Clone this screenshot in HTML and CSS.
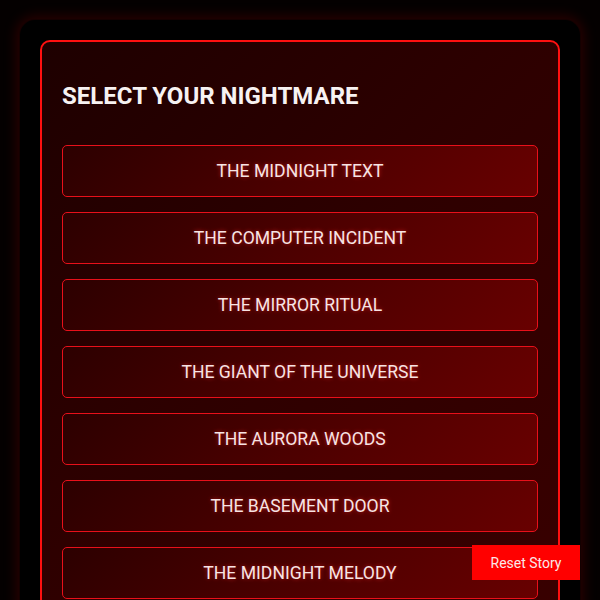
FILE: index.html
```html
<!DOCTYPE html>
<html lang="en">
<head>
<meta charset="utf-8">
<title>Select Your Nightmare</title>
<link rel="stylesheet" href="styles.css">
</head>
<body>
<div class="wrapper">
  <div class="card">
    <h2 class="title">SELECT YOUR NIGHTMARE</h2>
    <div class="stories">
      <button class="story">THE MIDNIGHT TEXT</button>
      <button class="story">THE COMPUTER INCIDENT</button>
      <button class="story">THE MIRROR RITUAL</button>
      <button class="story">THE GIANT OF THE UNIVERSE</button>
      <button class="story">THE AURORA WOODS</button>
      <button class="story">THE BASEMENT DOOR</button>
      <button class="story">THE MIDNIGHT MELODY</button>
      <button class="story">THE HOLLOW CALL</button>
    </div>
  </div>
</div>
<button class="reset">Reset Story</button>
</body>
</html>
```
FILE: styles.css
```css
html, body {
  margin: 0;
  padding: 0;
}
body {
  background: #040000;
  font-family: Roboto, "Liberation Sans", Arial, sans-serif;
  padding: 20px;
}
.wrapper {
  background: #000;
  border-radius: 16px;
  padding: 20px;
  box-shadow: 0 0 14px 2px rgba(200, 0, 0, 0.22);
  border: 1px solid rgba(255, 0, 0, 0.08);
  margin: -1px;
}
.card {
  border: 2px solid #ff1010;
  border-radius: 10px;
  padding: 20px;
  background: linear-gradient(135deg, #1e0000 0%, #2e0000 45%, #3a0000 100%);
}
.title {
  margin: 20px 0 35px;
  color: #f7f2f2;
  font-size: 24px;
  font-weight: 700;
  line-height: 28px;
}
.stories {
  display: flex;
  flex-direction: column;
  gap: 15px;
}
.story {
  display: block;
  width: 100%;
  height: 52px;
  border: 1px solid #e8101a;
  border-radius: 5px;
  background: linear-gradient(135deg, #2c0000 0%, #4c0000 50%, #680000 100%);
  color: #f6e4e4;
  font-family: Roboto, "Liberation Sans", Arial, sans-serif;
  font-size: 17.6px;
  text-shadow: 0 0 4px rgba(255, 40, 40, 0.6);
  cursor: pointer;
}
.reset {
  position: fixed;
  right: 20px;
  bottom: 20px;
  width: 108px;
  height: 35px;
  border: none;
  background: #ff0000;
  color: #fbe8e8;
  font-family: Roboto, "Liberation Sans", Arial, sans-serif;
  font-size: 14px;
  padding: 0;
}
```
